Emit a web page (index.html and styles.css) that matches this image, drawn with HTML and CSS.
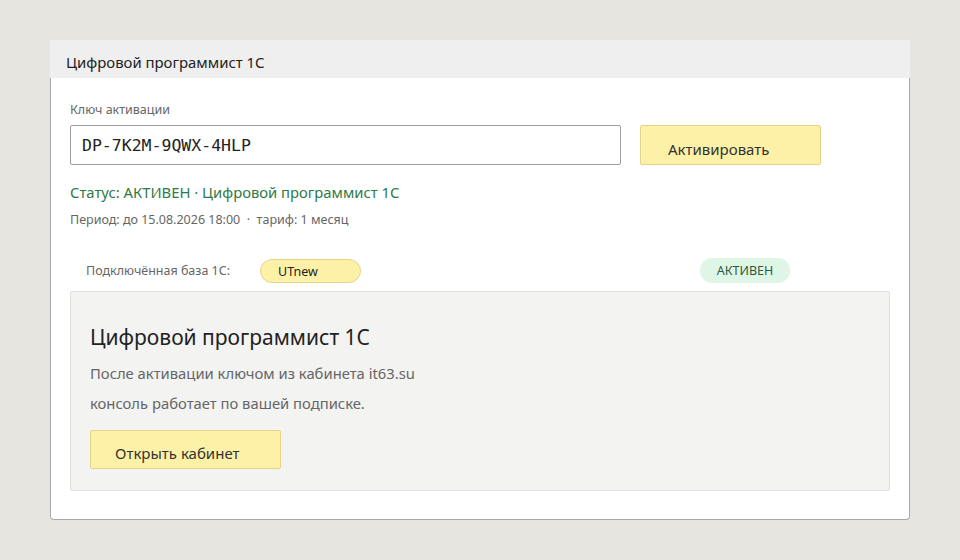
FILE: index.html
```html
<!DOCTYPE html>
<html lang="ru">
<head>
    <meta charset="UTF-8">
    <meta name="viewport" content="width=device-width, initial-scale=1.0">
    <title>Цифровой программист 1С</title>
    <link rel="stylesheet" href="styles.css">
</head>
<body>
    <div class="window">
        <div class="window-title">Цифровой программист 1С</div>

        <div class="window-body">
            <label class="field-label" for="key">Ключ активации</label>
            <div class="key-row">
                <input type="text" id="key" class="key-input" value="DP-7K2M-9QWX-4HLP">
                <button class="btn btn-activate">Активировать</button>
            </div>

            <div class="status">Статус: АКТИВЕН · Цифровой программист 1С</div>
            <div class="period">Период: до 15.08.2026 18:00 &nbsp;·&nbsp; тариф: 1 месяц</div>

            <div class="base-row">
                <span class="base-label">Подключённая база 1С:</span>
                <span class="pill pill-base">UTnew</span>
                <span class="pill pill-active">АКТИВЕН</span>
            </div>

            <div class="info">
                <h2>Цифровой программист 1С</h2>
                <p>После активации ключом из кабинета it63.su</p>
                <p>консоль работает по вашей подписке.</p>
                <button class="btn btn-cabinet">Открыть кабинет</button>
            </div>
        </div>
    </div>
</body>
</html>
```

FILE: styles.css
```css
:root {
    --bg-color: #e7e5e0;
    --title-bg: #efefef;
    --border-color: #a8a8a8;
    --yellow: #fdf1a8;
    --yellow-border: #e6d48a;
    --green: #2f7a47;
    --text-color: #222;
    --muted: #666;
}

body {
    font-family: 'Noto Sans', 'Open Sans', sans-serif;
    margin: 0;
    padding: 40px 50px;
    background-color: var(--bg-color);
    color: var(--text-color);
}

.window {
    width: 860px;
}

.window-title {
    background: var(--title-bg);
    height: 38px;
    line-height: 44px;
    padding-left: 16px;
    font-size: 14.9px;
    color: #222;
}

.window-body {
    background: white;
    border: 1px solid var(--border-color);
    border-top: none;
    border-radius: 0 0 4px 4px;
    padding: 24px 19px 28px 19px;
}

.field-label {
    display: block;
    font-size: 12.5px;
    line-height: 16px;
    color: var(--muted);
    margin-bottom: 7px;
}

.key-row {
    display: flex;
    gap: 19px;
}

.key-input {
    width: 551px;
    height: 40px;
    box-sizing: border-box;
    border: 1px solid #9e9e9e;
    border-radius: 2px;
    padding: 0 11px;
    font-family: 'DejaVu Sans Mono', monospace;
    font-size: 16.5px;
    color: #222;
    outline: none;
}

.btn {
    font-family: 'Noto Sans', 'Open Sans', sans-serif;
    background: var(--yellow);
    border: 1px solid var(--yellow-border);
    border-radius: 2px;
    color: #333;
    font-size: 15px;
    text-align: left;
    cursor: pointer;
    box-sizing: border-box;
}

.btn-activate {
    width: 181px;
    height: 40px;
    padding: 7px 0 0 27px;
}

.status {
    margin-top: 17px;
    font-size: 14.8px;
    line-height: 20px;
    color: var(--green);
}

.period {
    margin-top: 10px;
    font-size: 12.5px;
    line-height: 16px;
    color: var(--muted);
}

.base-row {
    display: flex;
    align-items: center;
    margin-top: 30px;
    padding: 0 100px 0 16px;
    height: 25px;
}

.base-label {
    width: 174px;
    font-size: 12.5px;
    color: var(--muted);
}

.pill {
    font-size: 12.5px;
    line-height: 23px;
    border-radius: 12px;
    box-sizing: border-box;
}

.pill-base {
    width: 101px;
    height: 24px;
    padding-left: 17px;
    background: var(--yellow);
    border: 1px solid var(--yellow-border);
    color: #222;
}

.pill-active {
    margin-left: auto;
    width: 90px;
    height: 25px;
    line-height: 25px;
    text-align: center;
    background: #dff6e7;
    color: #2d5a3e;
}

.info {
    margin-top: 8px;
    background: #f3f3f2;
    border: 1px solid #e0e0de;
    border-radius: 2px;
    padding: 31px 19px 21px 19px;
}

.info h2 {
    margin: 0;
    font-size: 21px;
    font-weight: normal;
    line-height: 28px;
    color: #222;
}

.info p {
    margin: 0;
    font-size: 14.8px;
    line-height: 30px;
    color: var(--muted);
}

.info p:first-of-type {
    margin-top: 7px;
}

.btn-cabinet {
    margin-top: 12px;
    width: 191px;
    height: 39px;
    padding: 6px 0 0 24px;
}
```
